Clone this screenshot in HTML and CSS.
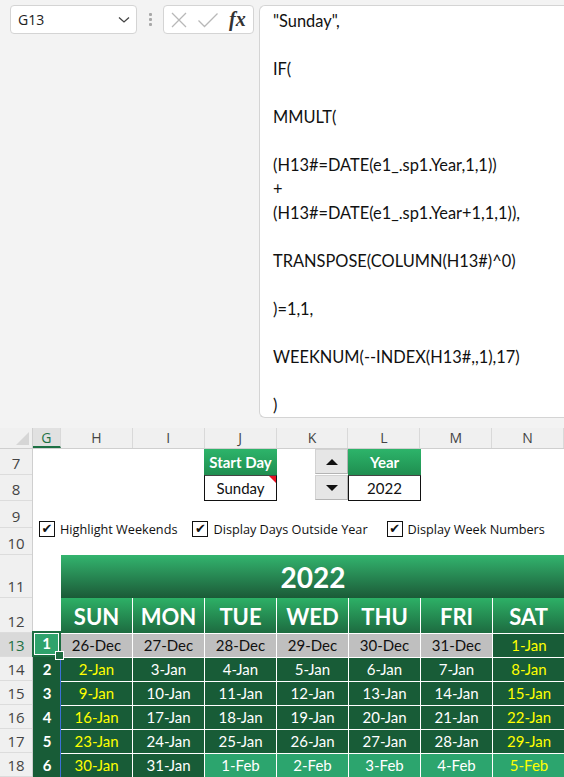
FILE: index.html
```html
<!DOCTYPE html>
<html lang="en">
<head>
    <meta charset="UTF-8">
    <meta name="viewport" content="width=device-width, initial-scale=1.0">
    <title>Calendar - G13</title>
    <link rel="stylesheet" href="styles.css">
</head>
<body>

    <div class="topbar">
        <div class="namebox">
            <span>G13</span>
            <svg class="chevron" width="12" height="8" viewBox="0 0 12 8"><path d="M1 1.5 L6 6 L11 1.5" fill="none" stroke="#444" stroke-width="1.3"/></svg>
        </div>
        <div class="grip"><i></i><i></i><i></i></div>
        <div class="fnbox">
            <svg width="18" height="18" viewBox="0 0 18 18"><path d="M2 2 L16 16 M16 2 L2 16" stroke="#b8b8b8" stroke-width="1.3" fill="none"/></svg>
            <svg width="22" height="18" viewBox="0 0 22 18"><path d="M1.5 9.5 L7.5 15.5 L20.5 2.5" stroke="#b8b8b8" stroke-width="1.3" fill="none"/></svg>
            <span class="fx">fx</span>
        </div>
        <div class="formula">"Sunday",

IF(

MMULT(

(H13#=DATE(e1_.sp1.Year,1,1))
+
(H13#=DATE(e1_.sp1.Year+1,1,1)),

TRANSPOSE(COLUMN(H13#)^0)

)=1,1,

WEEKNUM(--INDEX(H13#,,1),17)

)</div>
    </div>

    <div class="sheet">
        <div class="colheads">
            <div class="corner"></div>
            <div class="ch narrow selected">G</div>
            <div class="ch">H</div>
            <div class="ch">I</div>
            <div class="ch">J</div>
            <div class="ch">K</div>
            <div class="ch">L</div>
            <div class="ch">M</div>
            <div class="ch">N</div>
        </div>

        <div class="sheet-body">
            <div class="rowheads">
                <div class="rh h26">7</div>
                <div class="rh h26">8</div>
                <div class="rh h27">9</div>
                <div class="rh h27">10</div>
                <div class="rh h43">11</div>
                <div class="rh h35">12</div>
                <div class="rh h24 selected">13</div>
                <div class="rh h24">14</div>
                <div class="rh h24">15</div>
                <div class="rh h24">16</div>
                <div class="rh h24">17</div>
                <div class="rh h24">18</div>
            </div>

            <div class="cells">
                <div class="controls">
                    <div class="spacer"></div>
                    <div class="input-box">
                        <div class="input-head">Start Day</div>
                        <div class="input-value has-note">Sunday</div>
                    </div>
                    <div class="spin-col">
                        <div class="spinner">
                            <div class="spin-btn"><span class="tri-up"></span></div>
                            <div class="spin-btn"><span class="tri-down"></span></div>
                        </div>
                    </div>
                    <div class="input-box">
                        <div class="input-head">Year</div>
                        <div class="input-value">2022</div>
                    </div>
                </div>

                <div class="options">
                    <label class="option opt-1"><span class="box">&#10004;</span>Highlight Weekends</label>
                    <label class="option opt-2"><span class="box">&#10004;</span>Display Days Outside Year</label>
                    <label class="option"><span class="box">&#10004;</span>Display Week Numbers</label>
                </div>

                <div class="calendar">
                    <div class="blank"></div>
                    <div class="cal-title">2022</div>

                    <div class="day">SUN</div>
                    <div class="day">MON</div>
                    <div class="day">TUE</div>
                    <div class="day">WED</div>
                    <div class="day">THU</div>
                    <div class="day">FRI</div>
                    <div class="day last">SAT</div>

                    <div class="wk active">1</div>
                    <div class="dt out">26-Dec</div>
                    <div class="dt out">27-Dec</div>
                    <div class="dt out">28-Dec</div>
                    <div class="dt out">29-Dec</div>
                    <div class="dt out">30-Dec</div>
                    <div class="dt out">31-Dec</div>
                    <div class="dt we last">1-Jan</div>

                    <div class="wk">2</div>
                    <div class="dt we">2-Jan</div>
                    <div class="dt">3-Jan</div>
                    <div class="dt">4-Jan</div>
                    <div class="dt">5-Jan</div>
                    <div class="dt">6-Jan</div>
                    <div class="dt">7-Jan</div>
                    <div class="dt we last">8-Jan</div>

                    <div class="wk">3</div>
                    <div class="dt we">9-Jan</div>
                    <div class="dt">10-Jan</div>
                    <div class="dt">11-Jan</div>
                    <div class="dt">12-Jan</div>
                    <div class="dt">13-Jan</div>
                    <div class="dt">14-Jan</div>
                    <div class="dt we last">15-Jan</div>

                    <div class="wk">4</div>
                    <div class="dt we">16-Jan</div>
                    <div class="dt">17-Jan</div>
                    <div class="dt">18-Jan</div>
                    <div class="dt">19-Jan</div>
                    <div class="dt">20-Jan</div>
                    <div class="dt">21-Jan</div>
                    <div class="dt we last">22-Jan</div>

                    <div class="wk">5</div>
                    <div class="dt we">23-Jan</div>
                    <div class="dt">24-Jan</div>
                    <div class="dt">25-Jan</div>
                    <div class="dt">26-Jan</div>
                    <div class="dt">27-Jan</div>
                    <div class="dt">28-Jan</div>
                    <div class="dt we last">29-Jan</div>

                    <div class="wk">6</div>
                    <div class="dt we">30-Jan</div>
                    <div class="dt">31-Jan</div>
                    <div class="dt next">1-Feb</div>
                    <div class="dt next">2-Feb</div>
                    <div class="dt next">3-Feb</div>
                    <div class="dt next">4-Feb</div>
                    <div class="dt next we last">5-Feb</div>
                </div>
            </div>
        </div>
    </div>

</body>
</html>
```

FILE: styles.css
```css
* {
    box-sizing: border-box;
}

body {
    margin: 0;
    width: 564px;
    height: 777px;
    overflow: hidden;
    background: #f3f3f3;
    font-family: "Open Sans", "Noto Sans", sans-serif;
}

/* ---------- formula bar ---------- */
.topbar {
    display: flex;
    align-items: flex-start;
    height: 428px;
    padding: 5px 0 10px 10px;
}

.namebox {
    width: 127px;
    height: 29px;
    background: #fff;
    border: 1px solid #d4d4d4;
    border-radius: 4px;
    display: flex;
    align-items: center;
    justify-content: space-between;
    padding: 0 6px 0 7px;
    font-size: 14px;
    color: #222;
}

.grip {
    width: 26px;
    height: 29px;
    display: flex;
    flex-direction: column;
    align-items: center;
    justify-content: center;
    gap: 2px;
}

.grip i {
    width: 3px;
    height: 3px;
    background: #a8a8a8;
    border-radius: 1px;
}

.fnbox {
    width: 91px;
    height: 29px;
    background: #fff;
    border: 1px solid #d4d4d4;
    border-radius: 4px;
    display: flex;
    align-items: center;
    gap: 9px;
    padding: 0 0 0 6px;
}

.fx {
    font-family: "Liberation Serif", serif;
    font-style: italic;
    font-weight: bold;
    font-size: 20px;
    color: #333;
    margin-left: 1px;
}

.formula {
    margin-left: auto;
    width: 305px;
    height: 413px;
    background: #fff;
    border: 1px solid #d4d4d4;
    border-right: none;
    border-radius: 6px 0 0 6px;
    padding: 3px 0 0 13px;
    white-space: pre;
    font-family: Lato, sans-serif;
    font-size: 16.4px;
    line-height: 24px;
    color: #111;
    overflow: hidden;
}

/* ---------- sheet ---------- */
.sheet {
    background: #fff;
}

.colheads {
    display: flex;
    height: 21px;
    background: #f0f0f0;
    border-bottom: 1px solid #cfcfcf;
}

.corner {
    width: 33px;
    position: relative;
    border-right: 1px solid #cfcfcf;
}

.corner::after {
    content: "";
    position: absolute;
    right: 3px;
    bottom: 3px;
    border-style: solid;
    border-width: 0 0 13px 13px;
    border-color: transparent transparent #d6d6d6 transparent;
}

.ch {
    width: 72px;
    border-right: 1px solid #d9d9d9;
    text-align: center;
    font-size: 14px;
    line-height: 20px;
    color: #444;
}

.ch.narrow {
    width: 28px;
}

.ch.selected {
    background: #e1e1e1;
    color: #1e7145;
    border-bottom: 2px solid #1e7145;
}

.sheet-body {
    display: flex;
}

.rowheads {
    width: 33px;
    background: #f0f0f0;
    border-right: 1px solid #cfcfcf;
}

.rh {
    text-align: center;
    font-size: 15px;
    color: #444;
    border-bottom: 1px solid #dcdcdc;
    display: flex;
    align-items: flex-end;
    justify-content: center;
    padding-bottom: 1px;
}

.rh.selected {
    background: #d9d9d9;
    color: #1e7145;
}

.h24 { height: 24px; }
.h26 { height: 26px; }
.h27 { height: 27px; }
.h35 { height: 35px; }
.h43 { height: 43px; }

.cells {
    width: 531px;
}

/* ---------- inputs ---------- */
.controls {
    display: flex;
    height: 52px;
}

.spacer {
    width: 171px;
}

.input-box {
    width: 73px;
    display: flex;
    flex-direction: column;
}

.input-head {
    height: 26px;
    background: linear-gradient(#2db46a, #1f8e50);
    color: #fff;
    font-family: Lato, sans-serif;
    font-weight: bold;
    font-size: 15px;
    text-align: center;
    line-height: 26px;
}

.input-value {
    height: 26px;
    border: 1px solid #111;
    border-top: 1px solid #444;
    font-family: Lato, sans-serif;
    font-size: 15px;
    text-align: center;
    line-height: 24px;
    color: #111;
    position: relative;
}

.input-value.has-note::after {
    content: "";
    position: absolute;
    top: 0;
    right: 0;
    border-style: solid;
    border-width: 0 7px 7px 0;
    border-color: transparent #e81123 transparent transparent;
}

.spin-col {
    width: 71px;
    display: flex;
    justify-content: flex-end;
}

.spinner {
    width: 33px;
    display: flex;
    flex-direction: column;
    gap: 1px;
}

.spin-btn {
    height: 25px;
    background: #e6e6e6;
    border: 1px solid #d2d2d2;
    border-bottom-color: #b4b4b4;
    border-right-color: #b4b4b4;
    display: flex;
    align-items: center;
    justify-content: center;
}

.tri-up {
    border-style: solid;
    border-width: 0 6px 6px 6px;
    border-color: transparent transparent #111 transparent;
}

.tri-down {
    border-style: solid;
    border-width: 6px 6px 0 6px;
    border-color: #111 transparent transparent transparent;
}

/* ---------- options ---------- */
.options {
    height: 54px;
    display: flex;
    align-items: center;
    padding: 0 0 0 6px;
    font-size: 12.7px;
    color: #111;
}

.option {
    display: flex;
    align-items: center;
    gap: 5px;
    margin-top: 1px;
}

.opt-1 {
    margin-right: 15px;
}

.opt-2 {
    margin-right: 19px;
}

.box {
    width: 16px;
    height: 16px;
    border: 1px solid #111;
    background: #fff;
    font-size: 13px;
    font-weight: bold;
    line-height: 14px;
    text-align: center;
    font-family: "DejaVu Sans", sans-serif;
}

/* ---------- calendar ---------- */
.calendar {
    display: grid;
    grid-template-columns: 28px repeat(7, 72px);
    grid-template-rows: 43px 35px repeat(6, 24px);
    font-family: Lato, sans-serif;
}

.blank {
    grid-row: 1 / span 2;
}

.cal-title {
    grid-column: 2 / span 7;
    background: linear-gradient(#33b46e, #1b5a37);
    color: #fff;
    font-weight: bold;
    font-size: 28px;
    text-align: center;
    line-height: 45px;
}

.day {
    background: linear-gradient(#2db066, #1d6b40);
    color: #fff;
    font-weight: bold;
    font-size: 22px;
    text-align: center;
    line-height: 38px;
    border-right: 1px solid #fff;
}

.wk {
    background: #185c37;
    color: #fff;
    font-weight: bold;
    font-size: 15px;
    text-align: center;
    line-height: 24px;
    box-shadow: inset -1px 0 #3d6fd6;
}

.wk.active {
    background: #2fa36c;
    border: 2px solid #1d6d41;
    box-shadow: inset 0 0 0 1px #fff;
    line-height: 20px;
    position: relative;
    margin: -2px 0 0 -1px;
    height: 26px;
}

.wk.active::after {
    content: "";
    position: absolute;
    right: -5px;
    bottom: -5px;
    width: 7px;
    height: 7px;
    background: #1d6d41;
    border: 1px solid #fff;
}

.dt {
    background: #185c37;
    color: #fff;
    font-size: 15px;
    text-align: center;
    line-height: 23px;
    border-top: 1px solid #fff;
    border-right: 1px solid #fff;
}

.dt.last {
    border-right: none;
}

.dt.we {
    color: #ffff00;
}

.dt.out {
    background: #bfbfbf;
    color: #111;
}

.dt.next {
    background: #2ca56e;
}
```
